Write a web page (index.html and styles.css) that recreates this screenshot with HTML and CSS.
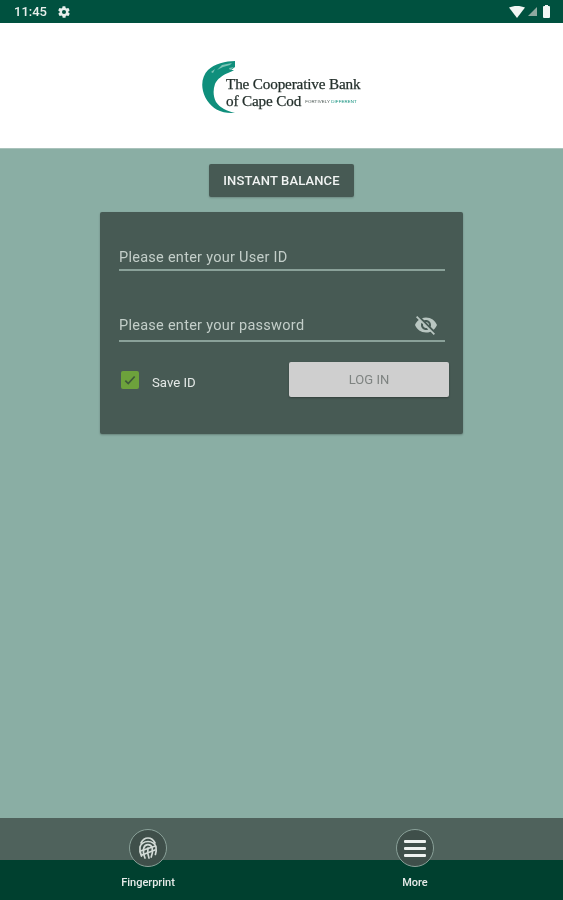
FILE: index.html
```html
<!DOCTYPE html>
<html lang="en">
<head>
<meta charset="utf-8">
<title>The Cooperative Bank of Cape Cod</title>
<link rel="stylesheet" href="styles.css">
</head>
<body>
<div class="app">
  <div class="status">
    <div class="status-left">
      <span class="time">11:45</span>
      <svg class="gear" width="14" height="14" viewBox="0 0 24 24"><path fill="#e8efec" d="M19.4 13a7.5 7.5 0 0 0 0-2l2.1-1.6a.5.5 0 0 0 .1-.6l-2-3.5a.5.5 0 0 0-.6-.2l-2.5 1a7.3 7.3 0 0 0-1.7-1l-.4-2.7a.5.5 0 0 0-.5-.4h-4a.5.5 0 0 0-.5.4l-.4 2.7a7.3 7.3 0 0 0-1.7 1l-2.5-1a.5.5 0 0 0-.6.2l-2 3.5a.5.5 0 0 0 .1.6L4.6 11a7.5 7.5 0 0 0 0 2l-2.1 1.6a.5.5 0 0 0-.1.6l2 3.5c.1.2.4.3.6.2l2.5-1c.5.4 1.1.7 1.7 1l.4 2.7c0 .2.2.4.5.4h4c.3 0 .5-.2.5-.4l.4-2.7c.6-.3 1.2-.6 1.7-1l2.5 1c.2.1.5 0 .6-.2l2-3.5a.5.5 0 0 0-.1-.6L19.4 13zM12 15.5a3.5 3.5 0 1 1 0-7 3.5 3.5 0 0 1 0 7z"/></svg>
    </div>
    <div class="status-right">
      <svg width="16" height="12" viewBox="0 0 16 12"><path fill="#f2f6f4" d="M0 1.600C2.200.6 5 0 8 0s5.800.6 8 1.600L8 12z"/></svg>
      <svg width="9" height="9" viewBox="0 0 9 9"><path fill="#8fa9a0" d="M9 0v9H0z"/></svg>
      <svg class="battery" width="7" height="13" viewBox="0 0 7 13"><path fill="#f2f6f4" d="M2 0h3v1h1a1 1 0 0 1 1 1v10a1 1 0 0 1-1 1H1a1 1 0 0 1-1-1V2a1 1 0 0 1 1-1h1z"/></svg>
    </div>
  </div>

  <header class="brand">
    <div class="logo">
      <svg class="swoosh" width="38" height="54" viewBox="0 0 38 54">
        <path fill="#0f8f7c" d="M33 1C24 1 12 4 6 10 1 15-1 23 1 31c2 9 9 17 17 20 5 2 10 2 15 2-8-2-15-5-19-11-3-6-3-12-1-18 2-5 8-9 13-11 2-1 5-2 6-3l-3 0 4-3z"/>
        <path fill="#7cc4b6" d="M20 5l10-2-2 2-7 2-6 3zM27 8l5-1-4 3zM9 12l4-3-2 4z"/>
      </svg>
      <div class="wordmark">
        <div class="line-one">The Cooperative Bank</div>
        <div class="line-two"><span>of Cape Cod</span><small class="tag">FORTIVELY <em>DIFFERENT</em></small></div>
      </div>
    </div>
  </header>

  <main class="content">
    <button class="instant" type="button">INSTANT BALANCE</button>
    <section class="card">
      <div class="field field-user">
        <span class="placeholder">Please enter your User ID</span>
      </div>
      <div class="field field-pass">
        <span class="placeholder">Please enter your password</span>
        <svg class="eye" width="24" height="24" viewBox="0 0 24 24"><path fill="#b9c6c1" d="M12 7c2.760 0 5 2.240 5 5 0 .65-.13 1.260-.36 1.830l2.920 2.920c1.510-1.260 2.700-2.890 3.430-4.750-1.730-4.390-6-7.500-11-7.500-1.400 0-2.740.25-3.980.7l2.160 2.160C10.740 7.130 11.350 7 12 7zM2 4.270l2.280 2.280.46.46C3.080 8.300 1.780 10.020 1 12c1.730 4.390 6 7.500 11 7.500 1.550 0 3.030-.3 4.380-.84l.42.42L19.730 22 21 20.730 3.270 3 2 4.270zM7.530 9.800l1.550 1.550c-.05.21-.08.430-.08.650 0 1.660 1.340 3 3 3 .22 0 .44-.03.65-.08l1.550 1.550c-.67.330-1.410.530-2.200.530-2.760 0-5-2.240-5-5 0-.79.2-1.530.53-2.200zm4.310-.78l3.150 3.150.02-.16c0-1.660-1.340-3-3-3l-.17.010z"/></svg>
      </div>
      <div class="actions">
        <label class="save">
          <span class="check"><svg width="14" height="14" viewBox="0 0 24 24"><path fill="none" stroke="#3f5a3a" stroke-width="3" d="M4 13l5 5L20 6"/></svg></span>
          <span class="save-text">Save ID</span>
        </label>
        <button class="login" type="button">LOG IN</button>
      </div>
    </section>
  </main>

  <footer class="nav">
    <div class="nav-item">
      <span class="ring">
        <svg width="24" height="24" viewBox="0 0 24 24" fill="none" stroke="#d3dbd7" stroke-width="1.700" stroke-linecap="round">
          <path d="M5 7c1.500-3 4-5 7-5s5.500 2 7 5"/>
          <path d="M5.500 20C4 17 3.500 14 4 11c.6-3 4-5.500 8-5.500s7.400 2.500 8 5.500c.4 2.500.2 5-.6 7.500"/>
          <path d="M9 22C7.500 18.500 7 15 7.800 12c.5-2 2.300-3.300 4.200-3.300s3.700 1.300 4.200 3.300c.5 3 .2 6-1 9"/>
          <path d="M12 12c-.8 3.500-.3 7 1 10"/>
          <path d="M4.500 15l15-5M6 19l13-5"/>
        </svg>
      </span>
      <span class="nav-label">Fingerprint</span>
    </div>
    <div class="nav-item">
      <span class="ring">
        <span class="bars"><i></i><i></i><i></i></span>
      </span>
      <span class="nav-label">More</span>
    </div>
  </footer>
</div>
</body>
</html>
```

FILE: styles.css
```css
* { box-sizing: border-box; }
html, body { margin: 0; padding: 0; }
body { font-family: Roboto, "Liberation Sans", sans-serif; background: #8aaea4; }

.app {
  width: 563px;
  height: 900px;
  display: flex;
  flex-direction: column;
  background: #8aaea4;
  filter: blur(0.5px);
  overflow: hidden;
}

/* status bar */
.status {
  height: 23px;
  flex: none;
  background: #00513f;
  color: #e8efec;
  display: flex;
  justify-content: space-between;
  align-items: center;
  padding: 0 13px 0 14px;
}
.status-left { display: flex; align-items: center; gap: 10px; }
.time { font-size: 13px; font-weight: 500; }
.gear { display: block; }
.status-right { display: flex; align-items: center; gap: 3px; }
.status-right svg { display: block; }
.battery { margin-left: 3px; }

/* brand header */
.brand {
  height: 126px;
  flex: none;
  background: #fff;
  border-bottom: 1px solid #a9c2bb;
  display: flex;
  justify-content: center;
  padding-top: 37px;
}
.logo { display: flex; align-items: flex-start; margin-left: -1px; width: 158px; height: 54px; }
.swoosh { flex: none; display: block; margin-right: -14px; }
.wordmark {
  font-family: "Liberation Serif", serif;
  color: #24302c;
  font-size: 15.200px;
  line-height: 15px;
  padding-top: 16px;
  white-space: nowrap;
  letter-spacing: -0.150px;
  -webkit-text-stroke: 0.25px #24302c;
}
.line-two { display: flex; align-items: center; gap: 4px; }
.tag {
  font-family: "Liberation Sans", sans-serif;
  font-size: 4.400px;
  letter-spacing: 0.100px;
  color: #45524e;
  padding-top: 3px;
  -webkit-text-stroke: 0;
}
.tag em { font-style: normal; color: #0f8f7c; }

/* content */
.content {
  flex: 1;
  display: flex;
  flex-direction: column;
  align-items: center;
  padding-top: 15px;
}
.instant {
  width: 145px;
  height: 33px;
  border: 0;
  border-radius: 2px;
  background: #475a54;
  color: #f1f4f3;
  font: 500 13px Roboto, sans-serif;
  letter-spacing: 0.150px;
  box-shadow: 0 1px 2px rgba(0, 0, 0, .2);
  padding: 0;
}
.card {
  width: 363px;
  height: 222px;
  margin-top: 15px;
  background: #475a54;
  border-radius: 2px;
  box-shadow: 0 1px 2px rgba(0, 0, 0, .25);
  padding: 0 18px 0 19px;
  color: #c3cec9;
  display: flex;
  flex-direction: column;
}
.field {
  display: flex;
  align-items: center;
  justify-content: space-between;
  border-bottom: 2px solid #8aa199;
  font-size: 14.500px;
}
.field-user { height: 59px; padding-top: 33px; }
.field-pass { height: 71px; padding-top: 39px; padding-right: 7px; }
.placeholder { letter-spacing: 0.270px; white-space: nowrap; }
.eye { display: block; flex: none; }
.actions {
  display: flex;
  justify-content: space-between;
  align-items: center;
  margin-top: 20px;
  margin-right: -4px;
}
.save { display: flex; align-items: center; gap: 13px; font-size: 13.200px; color: #e4e9e7; padding-left: 2px; }
.save-text { padding-top: 6px; }
.check {
  width: 18px;
  height: 18px;
  background: #6da23c;
  border-radius: 2px;
  display: flex;
  align-items: center;
  justify-content: center;
}
.login {
  width: 160px;
  height: 35px;
  border: 0;
  border-radius: 2px;
  background: #cfcfcf;
  color: #7e8381;
  font: 400 13px Roboto, sans-serif;
  box-shadow: 0 1px 2px rgba(0, 0, 0, .3);
  padding: 0;
}

/* bottom nav */
.nav {
  height: 82px;
  flex: none;
  background: linear-gradient(to bottom, #4f625c 0, #4f625c 42px, #00402f 42px);
  display: grid;
  grid-template-columns: 148px 267px;
}
.nav-item {
  width: 80px;
  justify-self: end;
  margin-right: -40px;
  display: flex;
  flex-direction: column;
  align-items: center;
  padding-top: 11px;
}
.ring {
  width: 38px;
  height: 38px;
  border-radius: 50%;
  border: 1.500px solid #8aa199;
  background: #3f4f4a;
  display: flex;
  align-items: center;
  justify-content: center;
}
.ring svg { display: block; }
.bars { display: flex; flex-direction: column; gap: 4px; }
.bars i { display: block; width: 22px; height: 3px; background: #eef2f0; border-radius: 1px; }
.nav-label { margin-top: 9px; font-size: 11px; font-weight: 500; color: #e6ebe9; white-space: nowrap; }
```
